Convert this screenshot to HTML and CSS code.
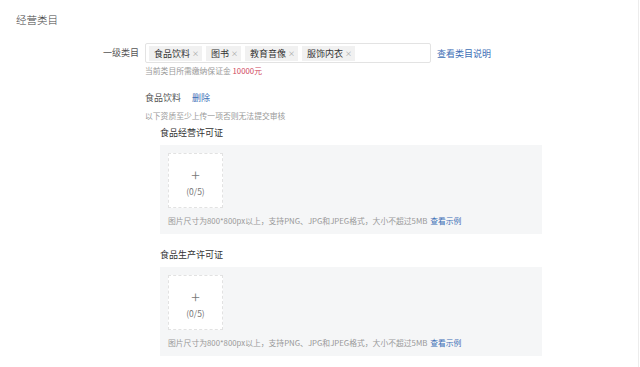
FILE: index.html
```html
<!DOCTYPE html>
<html lang="zh-CN">
<head>
    <meta charset="UTF-8">
    <title>经营类目</title>
    <link rel="stylesheet" href="styles.css">
</head>
<body>
    <div class="page">
        <h3 class="section-title">经营类目</h3>

        <div class="form-row">
            <div class="form-label">一级类目</div>
            <div class="form-body">
                <div class="field-line">
                    <div class="tag-input">
                        <span class="tag">食品饮料<i class="tag-close">×</i></span>
                        <span class="tag">图书<i class="tag-close">×</i></span>
                        <span class="tag">教育音像<i class="tag-close">×</i></span>
                        <span class="tag">服饰内衣<i class="tag-close">×</i></span>
                    </div>
                    <a class="link" href="#">查看类目说明</a>
                </div>
                <div class="deposit">当前类目所需缴纳保证金 <span class="amount">10000元</span></div>

                <div class="cat-head">
                    <span class="cat-name">食品饮料</span>
                    <a class="link" href="#">删除</a>
                </div>
                <div class="notice">以下资质至少上传一项否则无法提交审核</div>

                <div class="cert">
                    <div class="cert-title">食品经营许可证</div>
                    <div class="cert-panel">
                        <div class="upload">
                            <span class="upload-plus">+</span>
                            <span class="upload-count">(0/5)</span>
                        </div>
                        <div class="hint">图片尺寸为800*800px以上，支持PNG、JPG和JPEG格式，大小不超过5MB <a class="link" href="#">查看示例</a></div>
                    </div>
                </div>

                <div class="cert">
                    <div class="cert-title">食品生产许可证</div>
                    <div class="cert-panel">
                        <div class="upload">
                            <span class="upload-plus">+</span>
                            <span class="upload-count">(0/5)</span>
                        </div>
                        <div class="hint">图片尺寸为800*800px以上，支持PNG、JPG和JPEG格式，大小不超过5MB <a class="link" href="#">查看示例</a></div>
                    </div>
                </div>
            </div>
        </div>
    </div>
</body>
</html>
```

FILE: styles.css
```css
:root {
    --text-color: #333;
    --label-color: #555;
    --muted-color: #999;
    --link-color: #3d6fb6;
    --red-color: #d0485e;
    --panel-color: #f5f6f7;
    --border-color: #e3e3e3;
}

body {
    margin: 0;
    font-family: "Noto Sans CJK SC", "Noto Sans", sans-serif;
    color: var(--text-color);
    background-color: #fff;
}

.page {
    width: 639px;
    height: 367px;
    border-right: 1px solid #ececec;
    padding: 13px 0 0 16px;
    box-sizing: border-box;
    overflow: hidden;
}

.section-title {
    margin: 0;
    font-size: 10.5px;
    font-weight: 300;
    line-height: 14px;
    color: #444;
}

.form-row {
    display: flex;
    margin-top: 16px;
}

.form-label {
    width: 123px;
    padding-right: 6px;
    text-align: right;
    font-size: 9px;
    line-height: 20px;
    color: var(--label-color);
}

.form-body {
    flex: 1;
}

.field-line {
    display: flex;
    align-items: center;
    gap: 6px;
}

.tag-input {
    width: 286px;
    height: 20px;
    box-sizing: border-box;
    border: 1px solid var(--border-color);
    border-radius: 2px;
    display: flex;
    align-items: center;
    gap: 4px;
    padding-left: 3px;
}

.tag {
    display: flex;
    align-items: center;
    height: 15px;
    padding: 0 3px 0 5px;
    background-color: #f1f1f1;
    font-size: 9px;
    color: #333;
}

.tag-close {
    font-style: normal;
    font-size: 7px;
    color: #999;
    margin-left: 2px;
}

.link {
    color: var(--link-color);
    text-decoration: none;
    font-size: 9px;
}

.deposit {
    margin-top: 2px;
    font-size: 7.8px;
    line-height: 12px;
    color: var(--muted-color);
}

.amount {
    color: var(--red-color);
}

.cat-head {
    margin-top: 14px;
    line-height: 14px;
    font-size: 9px;
    display: flex;
    gap: 11px;
}

.cat-name {
    color: var(--label-color);
}

.notice {
    margin-top: 5px;
    font-size: 7.8px;
    line-height: 12px;
    color: var(--muted-color);
}

.cert {
    margin-left: 15px;
    margin-top: 4px;
}

.cert + .cert {
    margin-top: 14px;
}

.cert-title {
    font-size: 9px;
    line-height: 14px;
    color: #333;
}

.cert-panel {
    margin-top: 5px;
    width: 382px;
    box-sizing: border-box;
    padding: 8px 8px 7px;
    background-color: var(--panel-color);
}

.upload {
    width: 55px;
    height: 55px;
    box-sizing: border-box;
    border: 1px dashed #e2e2e2;
    background-color: #fff;
    display: flex;
    flex-direction: column;
    align-items: center;
    justify-content: center;
    color: #777;
}

.upload-plus {
    font-size: 16px;
    font-weight: 300;
    line-height: 14px;
    margin-top: 3px;
}

.upload-count {
    font-size: 8.5px;
    line-height: 12px;
    margin-top: 4px;
}

.hint {
    margin-top: 7px;
    font-size: 7.8px;
    line-height: 12px;
    color: var(--muted-color);
}

.hint .link {
    font-size: 7.8px;
    margin-left: 1px;
}
```
